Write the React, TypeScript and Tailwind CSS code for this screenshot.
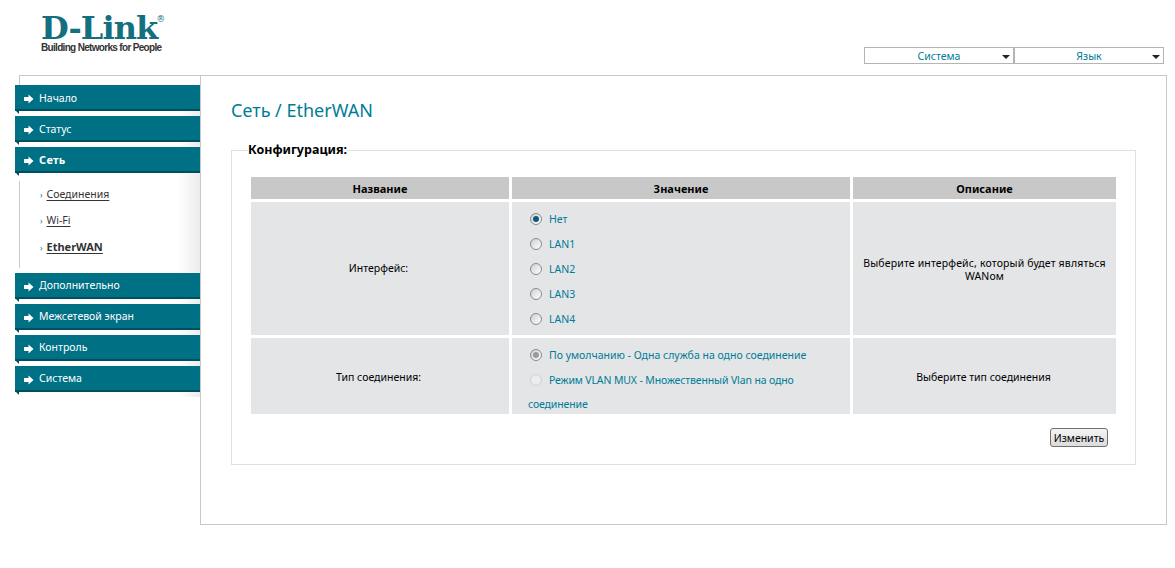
import React from "react";

const FONT = "font-['Noto_Sans','Liberation_Sans',sans-serif]";

const MenuArrow = () => (
  <svg width="10" height="10" viewBox="0 0 10 10" className="shrink-0">
    <path d="M0 3h4.5V0.5L9.5 5 4.5 9.5V7H0z" fill="#fff" />
  </svg>
);

const MenuButton: React.FC<{ label: string; bold?: boolean; raised?: boolean }> = ({ label, bold, raised }) => (
  <div className="h-[31px] bg-gradient-to-r from-white from-[88%] to-[#ececec]">
    <div className="relative flex h-[26px] items-center gap-[5px] border-b-2 border-[#004f5e] bg-[#007085] pl-[9px] pt-[3px] text-white">
      <MenuArrow />
      <span className={`${bold ? "mb-[1px] text-[11px] font-bold tracking-[0.3px]" : "text-[10.5px]"} ${raised ? "mb-[2px]" : ""}`}>
        {label}
      </span>
      <span className="absolute left-0 top-[25px] h-0 w-0 border-l-[4px] border-t-[4px] border-l-transparent border-t-[#004f5e]" />
    </div>
  </div>
);

const SubLink: React.FC<{ label: string; bold?: boolean }> = ({ label, bold }) => (
  <div className="flex h-[26.5px] items-center gap-[4px] pl-[20px] text-[#333]">
    <span className="text-[8px] leading-none text-[#007085]">›</span>
    <a className={`underline underline-offset-2 ${bold ? "mb-[1px] text-[11px] font-bold" : "text-[10.5px]"}`}>{label}</a>
  </div>
);

const Sidebar = () => (
  <aside className="ml-[15px] w-[185px]">
    <div className="ml-[4px] h-[10px] border-l border-t border-[#c8c8c8]" />
    <MenuButton label="Начало" />
    <MenuButton label="Статус" />
    <MenuButton label="Сеть" bold />
    <div className="h-[95px] bg-gradient-to-r from-white from-[88%] to-[#ececec] pt-[3px]">
      <div className="ml-[4px] h-[87px] border-l border-[#c8c8c8] pt-[0.5px]">
        <SubLink label="Соединения" />
        <SubLink label="Wi-Fi" />
        <SubLink label="EtherWAN" bold />
      </div>
    </div>
    <MenuButton label="Дополнительно" raised />
    <MenuButton label="Межсетевой экран" raised />
    <MenuButton label="Контроль" raised />
    <MenuButton label="Система" raised />
  </aside>
);

const TopSelect: React.FC<{ label: string }> = ({ label }) => (
  <div className="relative flex h-[17px] w-[150px] items-center justify-center border border-[#b4b4b4] pt-[2px] text-[10.5px] text-[#007c96]">
    {label}
    <span className="absolute right-[3px] top-[7px] h-0 w-0 border-x-[4px] border-t-[4px] border-x-transparent border-t-[#222]" />
  </div>
);

const Radio: React.FC<{ state: "on" | "off" | "onDisabled" | "offDisabled" }> = ({ state }) => (
  <span
    className={`mr-[7px] ml-[2px] mt-[6px] inline-flex h-[12px] w-[12px] items-center justify-center rounded-full border align-top ${
      state === "offDisabled"
        ? "border-[#d0d0d0] bg-[#ececec]"
        : "border-[#8a8a8a] bg-gradient-to-br from-[#d0d0d0] to-white"
    }`}
  >
    {state === "on" && <span className="h-[6px] w-[6px] rounded-full bg-[#0b5a80]" />}
    {state === "onDisabled" && <span className="h-[6px] w-[6px] rounded-full bg-[#9a9a9a]" />}
  </span>
);

const Th: React.FC<{ children: React.ReactNode }> = ({ children }) => (
  <div className="flex items-center justify-center bg-[#c8c8c8] pt-[2px] text-[11px] font-bold text-black">{children}</div>
);

const Td: React.FC<{ children: React.ReactNode; className?: string }> = ({ children, className }) => (
  <div className={`flex items-center justify-center bg-[#e4e5e7] text-center text-[10.5px] leading-[13px] text-black ${className ?? "px-[8px]"}`}>
    {children}
  </div>
);

const App = () => (
  <div className={`h-[568px] w-[1175px] overflow-hidden bg-white ${FONT}`}>
    <header className="flex h-[75px] justify-between">
      <div className="ml-[41px] mt-[13px] w-[122px]">
        <div className="flex h-[29px] items-start whitespace-nowrap font-['DejaVu_Serif',serif] text-[32px] font-bold leading-[30px] tracking-[-0.9px] text-[#14707f]">
          <span>D-Link</span>
          <span className="ml-[-1px] mt-[2px] text-[9px] font-normal leading-[8px] tracking-normal">®</span>
        </div>
        <div className="whitespace-nowrap font-['Liberation_Sans',sans-serif] text-[10px] font-bold leading-[12px] tracking-[-0.68px] text-[#333]">
          Building Networks for People
        </div>
      </div>
      <div className="mr-[11px] mt-[47px] flex">
        <TopSelect label="Система" />
        <TopSelect label="Язык" />
      </div>
    </header>
    <div className="flex">
      <Sidebar />
      <main className="h-[450px] w-[967px] border border-[#c8c8c8] pl-[30px] pt-[21px]">
        <h1 className="text-[18px] leading-[26px] text-[#007c96]">Сеть / EtherWAN</h1>
        <fieldset className="mt-[20px] h-[322px] w-[905px] border border-[#e0e0e0] pl-[19px] pr-[18px]">
          <legend className="ml-[-3px] pb-[2px] text-[12.5px] font-bold leading-[13px] text-black">Конфигурация:</legend>
          <div className="mt-[19px] grid grid-cols-[258px_338px_263px] grid-rows-[22px_133px_76px] gap-[3px]">
            <Th>Название</Th>
            <Th>Значение</Th>
            <Th>Описание</Th>
            <Td className="pr-[3px]">Интерфейс:</Td>
            <div className="bg-[#e4e5e7] pl-[16px] pt-[5px] text-[10.5px] leading-[25px] text-[#007c96]">
              <div><Radio state="on" />Нет</div>
              <div><Radio state="off" />LAN1</div>
              <div><Radio state="off" />LAN2</div>
              <div><Radio state="off" />LAN3</div>
              <div><Radio state="off" />LAN4</div>
            </div>
            <Td className="px-[4px] pt-[3px] tracking-[0.15px]">Выберите интерфейс, который будет являться WANом</Td>
            <Td className="pr-[3px] pt-[3px]">Тип соединения:</Td>
            <div className="overflow-hidden bg-[#e4e5e7] pl-[16px] pr-[8px] pt-[5px] text-[10.5px] leading-[24.5px] text-[#007c96]">
              <div><Radio state="onDisabled" />По умолчанию - Одна служба на одно соединение</div>
              <div className="tracking-[-0.13px]"><Radio state="offDisabled" />Режим VLAN MUX - Множественный Vlan на одно соединение</div>
            </div>
            <Td className="pr-[2px] pt-[2px]">Выберите тип соединения</Td>
          </div>
          <div className="mt-[14px] flex justify-end pr-[9px]">
            <button className="h-[19px] w-[58px] rounded-[3px] border border-[#707070] bg-gradient-to-b from-[#f4f4f4] to-[#dcdcdc] pt-[2px] text-[10.5px] leading-none text-black">
              Изменить
            </button>
          </div>
        </fieldset>
      </main>
    </div>
  </div>
);

export default App;
